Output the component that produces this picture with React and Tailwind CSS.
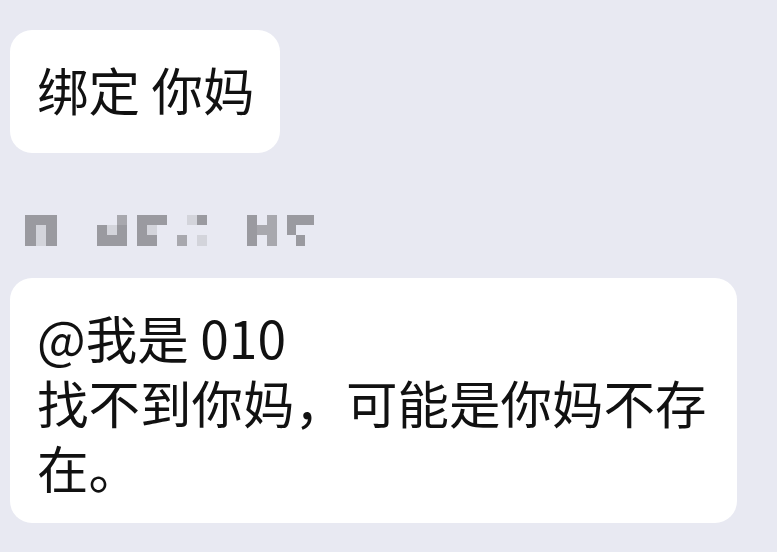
import React from "react";

const D = "bg-[#9a9aa0]";
const M = "bg-[#a8a8ae]";
const L = "bg-[#d3d4db]";
const B = "bg-transparent";

function Block({ cells, className }) {
  return (
    <div className={"grid grid-cols-3 grid-rows-[10px_10px_11px] h-[31px] " + className}>
      {cells.map((c, i) => (
        <div key={i} className={c} />
      ))}
    </div>
  );
}

export default function App() {
  return (
    <div
      className="w-[777px] h-[552px] bg-[#e8e9f2] overflow-hidden pt-[30px] pl-[10px] text-[#111111]"
      style={{ fontFamily: '"Noto Sans CJK SC", "Noto Sans", sans-serif' }}
    >
      <div className="w-[270px] h-[123px] rounded-[22px] bg-white pl-[27px] pt-[26px] text-[51.5px] leading-[65px] whitespace-nowrap">
        绑定 你妈
      </div>

      <div className="mt-[62px] ml-[15px] flex items-start">
        <Block className="w-[32px]" cells={[D, D, D, D, L, D, D, L, D]} />
        <Block className="w-[30px] ml-[40px]" cells={[B, B, M, D, L, D, D, D, D]} />
        <Block className="w-[30px] ml-[10px]" cells={[D, D, D, D, L, B, D, D, B]} />
        <Block className="w-[30px] ml-[10px]" cells={[B, L, D, B, B, B, M, B, L]} />
        <Block className="w-[30px] ml-[40px]" cells={[D, B, M, D, M, M, D, B, M]} />
        <Block className="w-[27px] ml-[10px]" cells={[D, D, D, D, B, B, B, D, B]} />
      </div>

      <div className="mt-[32px] w-[727px] h-[245px] rounded-[22px] bg-white pl-[27px] pt-[26px] text-[51.5px] leading-[65px] whitespace-nowrap">
        <div>@我是 010</div>
        <div>找不到你妈，可能是你妈不存</div>
        <div>在。</div>
      </div>
    </div>
  );
}
